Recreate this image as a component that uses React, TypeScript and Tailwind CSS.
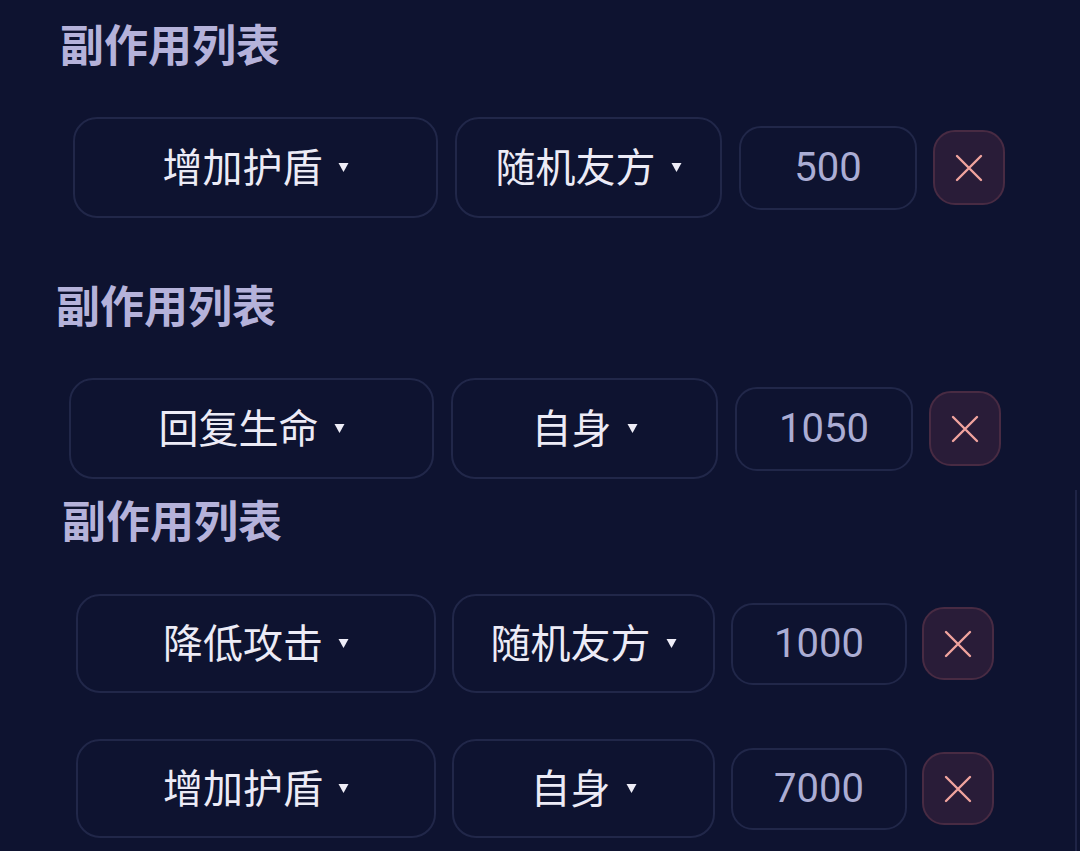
import React from 'react';

type Effect = {
  kind: string;
  target: string;
  amount: string;
};

type Size = 'lg' | 'sm';

const cjk = "font-['Noto_Sans_CJK_SC','Noto_Sans',sans-serif]";
const num = "font-['Roboto','Noto_Sans_CJK_SC',sans-serif]";

function Caret() {
  return (
    <svg width="11" height="11" viewBox="0 0 11 11" className="ml-[15px] shrink-0">
      <polygon points="0.5,1 10.5,1 5.5,10" fill="#eeedf7" />
    </svg>
  );
}

function CloseIcon() {
  return (
    <svg width="30" height="30" viewBox="0 0 30 30">
      <path d="M3 3 L27 27 M27 3 L3 27" stroke="#f0a39e" strokeWidth="2.4" strokeLinecap="round" />
    </svg>
  );
}

function EffectRow({ effect, size }: { effect: Effect; size: Size }) {
  const lg = size === 'lg';
  return (
    <div className={lg ? 'flex items-center gap-[17px]' : 'flex items-center gap-[16px]'}>
      <button
        className={
          lg
            ? 'flex h-[101px] w-[365px] items-center justify-center rounded-[24px] border-2 border-[#212749]'
            : 'flex h-[99px] w-[360px] items-center justify-center rounded-[24px] border-2 border-[#212749]'
        }
      >
        <span className={`${cjk} pb-[6px] text-[40px] leading-none text-[#ecebf6]`}>{effect.kind}</span>
        <Caret />
      </button>
      <button
        className={
          lg
            ? 'flex h-[101px] w-[267px] items-center justify-center rounded-[24px] border-2 border-[#212749]'
            : 'flex h-[99px] w-[263px] items-center justify-center rounded-[24px] border-2 border-[#212749]'
        }
      >
        <span className={`${cjk} pb-[6px] text-[40px] leading-none text-[#ecebf6]`}>{effect.target}</span>
        <Caret />
      </button>
      <div
        className={
          lg
            ? 'flex h-[84px] w-[178px] items-center justify-center rounded-[22px] border-2 border-[#212749]'
            : 'flex h-[82px] w-[176px] items-center justify-center rounded-[22px] border-2 border-[#212749]'
        }
      >
        <span className={`${num} text-[40px] leading-none text-[#abadd4]`}>{effect.amount}</span>
      </div>
      <button
        className={
          lg
            ? 'ml-[-1px] flex h-[75px] w-[72px] items-center justify-center rounded-[22px] border-2 border-[#482b43] bg-[#291c38]'
            : 'ml-[-1px] flex h-[73px] w-[72px] items-center justify-center rounded-[22px] border-2 border-[#482b43] bg-[#291c38]'
        }
      >
        <CloseIcon />
      </button>
    </div>
  );
}

function Title() {
  return (
    <h2 className={`${cjk} text-[44px] font-bold leading-[44px] text-[#b5b2da]`}>副作用列表</h2>
  );
}

export default function App() {
  return (
    <div className="h-[851px] w-[1080px] overflow-hidden bg-[#0e1330]">
      <section className="pl-[60px] pt-[21px]">
        <Title />
        <div className="mt-[52px] pl-[13px]">
          <EffectRow size="lg" effect={{ kind: '增加护盾', target: '随机友方', amount: '500' }} />
        </div>
      </section>

      <section className="mt-[64px] pl-[56px]">
        <Title />
        <div className="mt-[52px] pl-[13px]">
          <EffectRow size="lg" effect={{ kind: '回复生命', target: '自身', amount: '1050' }} />
        </div>
      </section>

      <section className="mr-[3px] mt-[11px] border-r-2 border-[#1f2446] pb-[20px] pl-[62px] pt-[7px]">
        <Title />
        <div className="mt-[53px] flex flex-col gap-[46px] pl-[14px]">
          <EffectRow size="sm" effect={{ kind: '降低攻击', target: '随机友方', amount: '1000' }} />
          <EffectRow size="sm" effect={{ kind: '增加护盾', target: '自身', amount: '7000' }} />
        </div>
      </section>
    </div>
  );
}
